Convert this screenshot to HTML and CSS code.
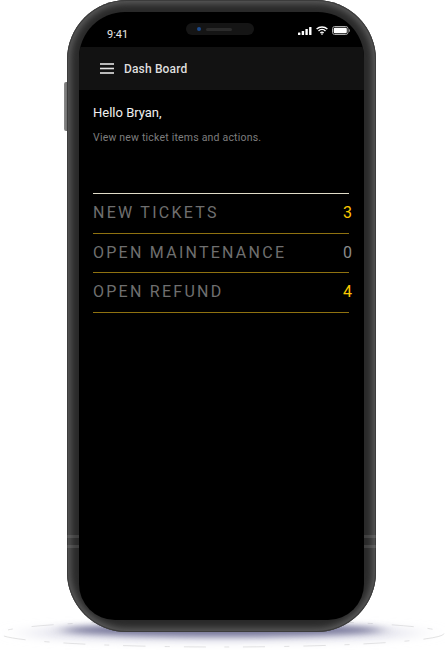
FILE: index.html
```html
<!DOCTYPE html>
<html lang="en">
<head>
<meta charset="utf-8">
<title>Dash Board</title>
<link rel="stylesheet" href="styles.css">
</head>
<body>
<div class="stage">
  <svg class="floor" width="445" height="50" viewBox="0 0 445 50" aria-hidden="true">
    <defs>
      <filter id="blur" x="-20%" y="-80%" width="140%" height="260%"><feGaussianBlur stdDeviation="9 3"/></filter>
      <filter id="blur2" x="-20%" y="-80%" width="140%" height="260%"><feGaussianBlur stdDeviation="18 5"/></filter>
    </defs>
    <ellipse cx="222" cy="27.5" rx="222" ry="13.5" fill="#fff" stroke="#cfcfcf" stroke-width="0.6" stroke-dasharray="22 14 5 19"/>
    <ellipse cx="222" cy="27" rx="195" ry="8" fill="#dcdce8" filter="url(#blur2)"/>
    <ellipse cx="222" cy="24" rx="160" ry="6.5" fill="#77779a" filter="url(#blur)"/>
  </svg>
  <div class="volume"></div>
  <div class="phone">
    <span class="band band-a"></span>
    <span class="band band-b"></span>
    <span class="band band-c"></span>
    <span class="band band-d"></span>
    <div class="screen">
      <div class="status">
        <span class="time">9:41</span>
        <div class="notch"><span class="lens"></span><span class="speaker"></span></div>
        <div class="status-icons">
          <svg width="14" height="8" viewBox="0 0 14 8" fill="#fff"><rect x="0" y="5.5" width="2.4" height="2.5" rx=".5"/><rect x="3.7" y="4" width="2.4" height="4" rx=".5"/><rect x="7.4" y="2" width="2.4" height="6" rx=".5"/><rect x="11.1" y="0" width="2.4" height="8" rx=".5"/></svg>
          <svg width="12" height="9" viewBox="0 0 12 9" fill="none" stroke="#fff" stroke-width="1.4"><path d="M.6 3.1a7.8 7.8 0 0 1 10.8 0"/><path d="M2.5 5a5 5 0 0 1 7 0"/><path d="M4.4 6.9a2.3 2.3 0 0 1 3.2 0"/><circle cx="6" cy="8" r=".5" fill="#fff" stroke-width=".6"/></svg>
          <svg width="18" height="9" viewBox="0 0 18 9"><rect x=".5" y=".5" width="15.5" height="8" rx="2.2" fill="none" stroke="#aaa"/><rect x="1.7" y="1.7" width="13.1" height="5.6" rx="1.2" fill="#fff"/><path d="M17 3v3a1.6 1.6 0 0 0 0-3z" fill="#888"/></svg>
        </div>
      </div>
      <header class="appbar">
        <svg class="menu" width="14" height="11" viewBox="0 0 14 11" fill="#e4e4e4"><rect width="14" height="1.6" y=".2"/><rect width="14" height="1.6" y="4.7"/><rect width="14" height="1.6" y="9.2"/></svg>
        <h1 class="title">Dash Board</h1>
      </header>
      <main class="content">
        <p class="hello">Hello Bryan,</p>
        <p class="sub">View new ticket items and actions.</p>
        <ul class="list">
          <li class="row"><span class="label">NEW TICKETS</span><span class="num hot">3</span></li>
          <li class="row"><span class="label">OPEN MAINTENANCE</span><span class="num">0</span></li>
          <li class="row"><span class="label">OPEN REFUND</span><span class="num hot">4</span></li>
        </ul>
      </main>
    </div>
  </div>
</div>
</body>
</html>
```
FILE: styles.css
```css
* { box-sizing: border-box; }
html, body { margin: 0; padding: 0; background: #fff; }
body { font-family: Roboto, "Liberation Sans", sans-serif; }
.stage { position: relative; width: 445px; height: 650px; overflow: hidden; }
.floor { position: absolute; left: 0; top: 606px; }
.volume {
  position: absolute; left: 64px; top: 82px; width: 5px; height: 49px;
  border-radius: 2px 0 0 2px;
  background: linear-gradient(90deg, #8c8c8c, #5c5c5c);
}
.phone {
  position: relative;
  margin-left: 67px; width: 309px; height: 632px; padding: 12px;
  border-radius: 60px;
  background: #2a2a2a;
  box-shadow: inset 0 0 0 1px #3c3c3c, inset 0 0 6px 4px #5a5a5a;
}
.band { position: absolute; height: 3px; width: 12px; background: rgba(255, 255, 255, .1); filter: blur(.5px); }
.band-a { left: 0; top: 535px; }
.band-b { left: 0; top: 545px; }
.band-c { right: 0; top: 535px; }
.band-d { right: 0; top: 545px; }
.screen {
  position: relative;
  width: 285px; height: 608px;
  background: #000; border-radius: 46px 46px 36px 36px; overflow: hidden;
  color: #fff;
}
.status {
  height: 35px; display: flex; align-items: center; justify-content: space-between;
  padding: 0 14px 0 28px; position: relative;
}
.time { font-size: 11px; color: #e8e8e8; margin-top: 10px; }
.notch {
  position: absolute; left: 107px; top: 11px; width: 68px; height: 12px;
  border-radius: 6px; background: #151515;
  display: flex; align-items: center; gap: 5px; padding-left: 11px;
}
.lens { width: 4px; height: 4px; border-radius: 50%; background: #1c4a8c; }
.speaker { width: 26px; height: 3px; border-radius: 2px; background: #2b2b2b; }
.status-icons { display: flex; align-items: center; gap: 4px; margin-top: 2px; }
.appbar {
  height: 43px; background: #121212;
  display: flex; align-items: center; gap: 10px; padding-left: 21px;
}
.menu { flex: none; }
.title { margin: 0; font-size: 12px; font-weight: 500; letter-spacing: .15px; color: #dedede; }
.content { padding: 15px 15px 0 14px; }
.hello { margin: 0; font-size: 13px; line-height: 16px; letter-spacing: 0; color: #f0f0f0; }
.sub { margin: 10px 0 0; font-size: 10.5px; line-height: 14px; letter-spacing: .2px; color: #7e7e7e; }
.list {
  list-style: none; margin: 48px 0 0; padding: 0;
  border-top: 1px solid #e0dcc8;
}
.row {
  height: 39.67px; padding-bottom: 1.5px; display: flex; align-items: center; justify-content: space-between;
  border-bottom: 1px solid #8f7210;
}
.label { font-size: 16px; letter-spacing: 2.25px; color: #6f6f6f; }
.num { font-size: 16px; color: #8a8a8a; margin-right: -3px; }
.hot { color: #fcc800; }
```
